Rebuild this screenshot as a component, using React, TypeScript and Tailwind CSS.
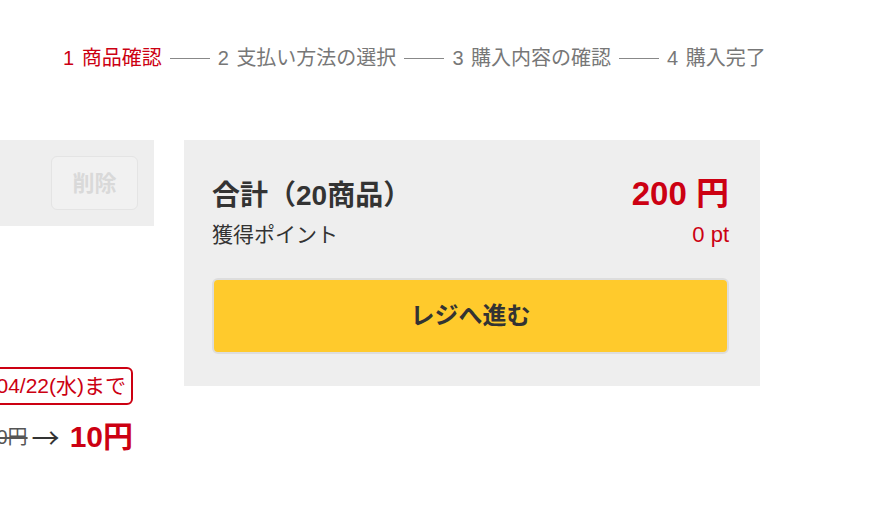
import React from 'react';

const steps = ['商品確認', '支払い方法の選択', '購入内容の確認', '購入完了'];

function Stepper() {
  return (
    <div className="flex items-center pl-[63px] pt-[46px] text-[20px] leading-[24px] text-[#777] whitespace-nowrap">
      {steps.map((label, i) => (
        <React.Fragment key={label}>
          {i > 0 && <span className="mx-[8px] inline-block h-px w-[40px] bg-[#888]" />}
          <span className={i === 0 ? 'text-[#cc0012]' : ''}>
            {i + 1} <span className="ml-[2px]">{label}</span>
          </span>
        </React.Fragment>
      ))}
    </div>
  );
}

function CartItemEdge() {
  return (
    <div className="flex w-[154px] shrink-0 flex-col items-end whitespace-nowrap">
      <div className="flex h-[86px] w-full justify-end bg-[#eeeeee] pr-[16px] pt-[16px]">
        <button className="h-[54px] w-[87px] rounded-[6px] border border-[#e4e4e4] bg-[#f1f1f1] text-[22px] font-bold text-[#d9d9d9]">
          削除
        </button>
      </div>
      <div className="mr-[21px] mt-[141px] flex h-[38px] items-center rounded-[6px] border-2 border-[#cc0012] pl-[40px] pr-[5px] text-[21px] text-[#cc0012]">
        04/22(水)まで
      </div>
      <div className="mr-[21px] mt-[17px] flex items-center">
        <span className="text-[20px] text-[#555] line-through">100円</span>
        <span className="ml-[4px] text-[28px] leading-none text-[#333]" style={{ fontFamily: '"Noto Sans CJK JP", sans-serif' }}>
          →
        </span>
        <span className="ml-[10px] text-[30px] font-bold leading-none text-[#cc0012]">10円</span>
      </div>
    </div>
  );
}

function Summary() {
  return (
    <div className="w-[576px] shrink-0 bg-[#eeeeee] pb-[32px] pl-[28px] pr-[31px] pt-[35px]">
      <div className="flex items-baseline justify-between leading-[38px]">
        <span className="text-[28px] font-bold text-[#333]">合計（20商品）</span>
        <span className="text-[33px] font-bold text-[#cc0012]">200 円</span>
      </div>
      <div className="mt-[5px] flex items-baseline justify-between leading-[30px]">
        <span className="text-[21px] text-[#333]">獲得ポイント</span>
        <span className="text-[22px] text-[#cc0012]">0 pt</span>
      </div>
      <button className="mt-[28px] flex h-[76px] w-full items-center justify-center rounded-[6px] border-2 border-[#dddddd] bg-[#ffca2c] text-[24px] font-bold text-[#333]">
        レジへ進む
      </button>
    </div>
  );
}

export default function App() {
  return (
    <div
      className="h-[520px] w-[888px] overflow-hidden bg-white"
      style={{ fontFamily: '"Liberation Sans", "Noto Sans CJK JP", sans-serif' }}
    >
      <Stepper />
      <div className="mt-[70px] flex items-start gap-[30px]">
        <CartItemEdge />
        <Summary />
      </div>
    </div>
  );
}
